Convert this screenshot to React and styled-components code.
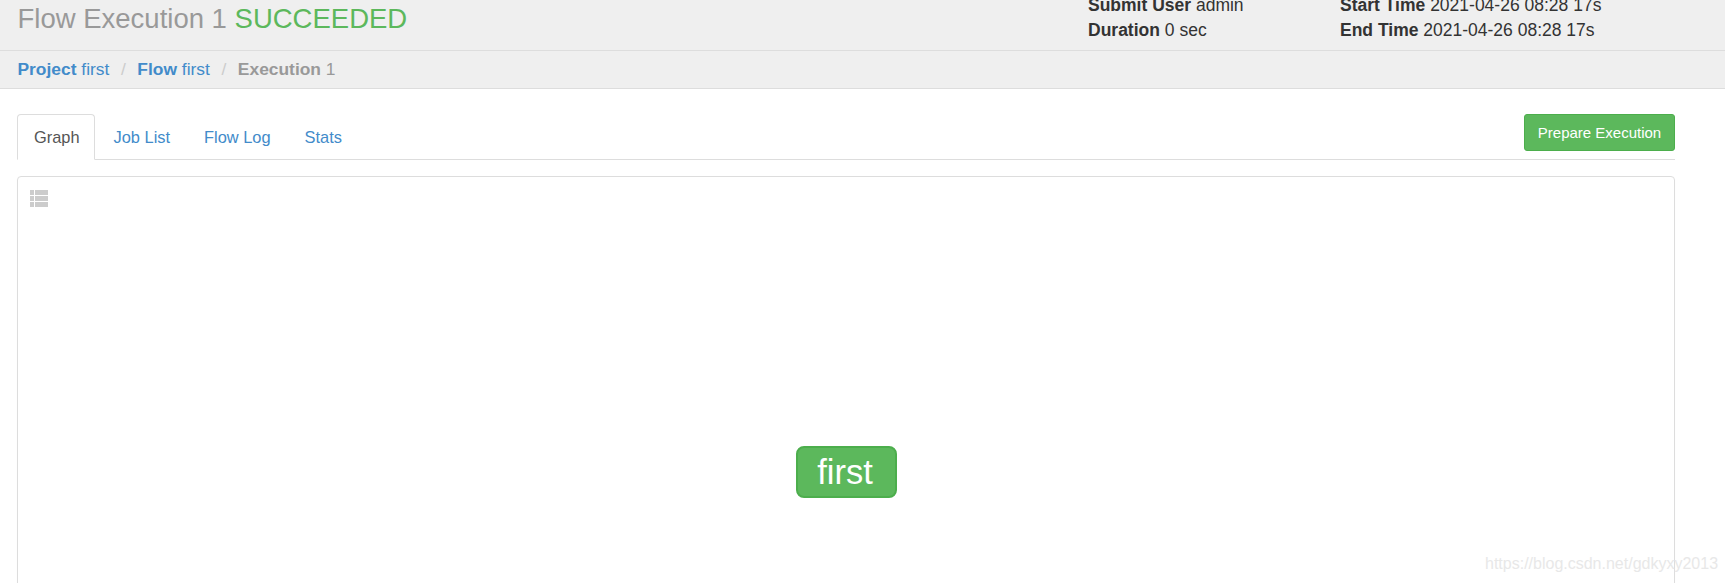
import React from "react"
import styled, { createGlobalStyle } from "styled-components"

const GlobalStyle = createGlobalStyle`
  html, body {
    margin: 0;
    height: 583px;
    overflow: hidden;
    background: #fff;
    font-family: "Liberation Sans", Arial, sans-serif;
    font-size: 14px;
    color: #333;
  }
`

const Header = styled.header`
  height: 50px;
  box-sizing: content-box;
  background: #efefef;
  border-bottom: 1px solid #ddd;
  padding-left: 18px;
  display: flex;
  overflow: hidden;
`

const Title = styled.h1`
  margin: 2px 0 0 -0.5px;
  width: 1070.5px;
  flex: none;
  font-size: 27.5px;
  line-height: 34px;
  font-weight: 400;
  color: #999;
`

const Status = styled.span`
  color: #5cb85c;
`

const Meta = styled.div`
  width: ${p => p.$width}px;
  flex: none;
  margin-top: -7px;
  font-size: 17.5px;
  line-height: 25px;
  color: #333;
`

const MetaRow = styled.div`
  white-space: nowrap;
`

const Crumbs = styled.nav`
  height: 37px;
  background: #efefef;
  border-bottom: 1px solid #ddd;
  padding-left: 17.5px;
  display: flex;
  align-items: center;
  font-size: 17.4px;
  color: #999;
`

const Crumb = styled.a`
  color: ${p => (p.$active ? "#999" : "#428bca")};
  text-decoration: none;
`

const Slash = styled.span`
  color: #ccc;
  padding: 0 11.6px;
`

const Content = styled.main`
  padding: 25px 50px 0 17px;
`

const TabBar = styled.div`
  height: 45px;
  display: flex;
  justify-content: space-between;
  align-items: flex-start;
  border-bottom: 1px solid #ddd;
`

const Tabs = styled.ul`
  margin: 0;
  padding: 0;
  list-style: none;
  display: flex;
`

const Tab = styled.li`
  height: 46px;
  box-sizing: border-box;
  padding: 12px 14px 0 16px;
  margin-right: 2px;
  font-size: 16.4px;
  line-height: 20px;
  border: 1px solid ${p => (p.$active ? "#ddd" : "transparent")};
  border-bottom: 1px solid ${p => (p.$active ? "#fff" : "transparent")};
  border-radius: 4px 4px 0 0;
  color: ${p => (p.$active ? "#555" : "#428bca")};
  background: ${p => (p.$active ? "#fff" : "transparent")};
`

const PrimaryButton = styled.button`
  width: 151px;
  height: 37px;
  border: 1px solid #4cae4c;
  border-radius: 3px;
  background: #5cb85c;
  color: #fff;
  font-family: inherit;
  font-size: 15px;
  padding: 0;
`

const GraphPanel = styled.section`
  position: relative;
  height: 500px;
  margin-top: 16px;
  border: 1px solid #ddd;
  border-radius: 4px;
  box-shadow: 0 1px 1px rgba(0, 0, 0, 0.05);
`

const ListIcon = styled.svg`
  display: block;
  margin: 13px 0 0 12px;
  fill: #ccc;
`

const FlowNode = styled.div`
  position: absolute;
  left: 778px;
  top: 269px;
  width: 101px;
  height: 52px;
  box-sizing: border-box;
  display: flex;
  align-items: center;
  justify-content: center;
  background: #5cb85c;
  border: 2px solid #4cae4c;
  border-radius: 8px;
  color: #fff;
  font-size: 34.5px;
  padding-right: 3px;
`

const Watermark = styled.div`
  position: absolute;
  left: 1485px;
  top: 554px;
  font-size: 16px;
  line-height: 20px;
  color: #e8e8e8;
  white-space: nowrap;
`

export default function App() {
  return (
    <>
      <GlobalStyle />
      <Header>
        <Title>
          Flow Execution 1 <Status>SUCCEEDED</Status>
        </Title>
        <Meta $width={252}>
          <MetaRow>
            <b>Submit User</b> admin
          </MetaRow>
          <MetaRow>
            <b>Duration</b> 0 sec
          </MetaRow>
        </Meta>
        <Meta $width={253}>
          <MetaRow>
            <b>Start Time</b> 2021-04-26 08:28 17s
          </MetaRow>
          <MetaRow>
            <b>End Time</b> 2021-04-26 08:28 17s
          </MetaRow>
        </Meta>
      </Header>
      <Crumbs>
        <Crumb>
          <b>Project</b> first
        </Crumb>
        <Slash>/</Slash>
        <Crumb>
          <b>Flow</b> first
        </Crumb>
        <Slash>/</Slash>
        <Crumb $active>
          <b>Execution</b> 1
        </Crumb>
      </Crumbs>
      <Content>
        <TabBar>
          <Tabs>
            <Tab $active>Graph</Tab>
            <Tab>Job List</Tab>
            <Tab>Flow Log</Tab>
            <Tab>Stats</Tab>
          </Tabs>
          <PrimaryButton>Prepare Execution</PrimaryButton>
        </TabBar>
        <GraphPanel>
          <ListIcon width="18" height="17" viewBox="0 0 18 17">
            <rect x="0" y="0" width="4" height="5" />
            <rect x="5" y="0" width="13" height="5" />
            <rect x="0" y="6" width="4" height="5" />
            <rect x="5" y="6" width="13" height="5" />
            <rect x="0" y="12" width="4" height="5" />
            <rect x="5" y="12" width="13" height="5" />
          </ListIcon>
          <FlowNode>first</FlowNode>
        </GraphPanel>
      </Content>
      <Watermark>https://blog.csdn.net/gdkyxy2013</Watermark>
    </>
  )
}
